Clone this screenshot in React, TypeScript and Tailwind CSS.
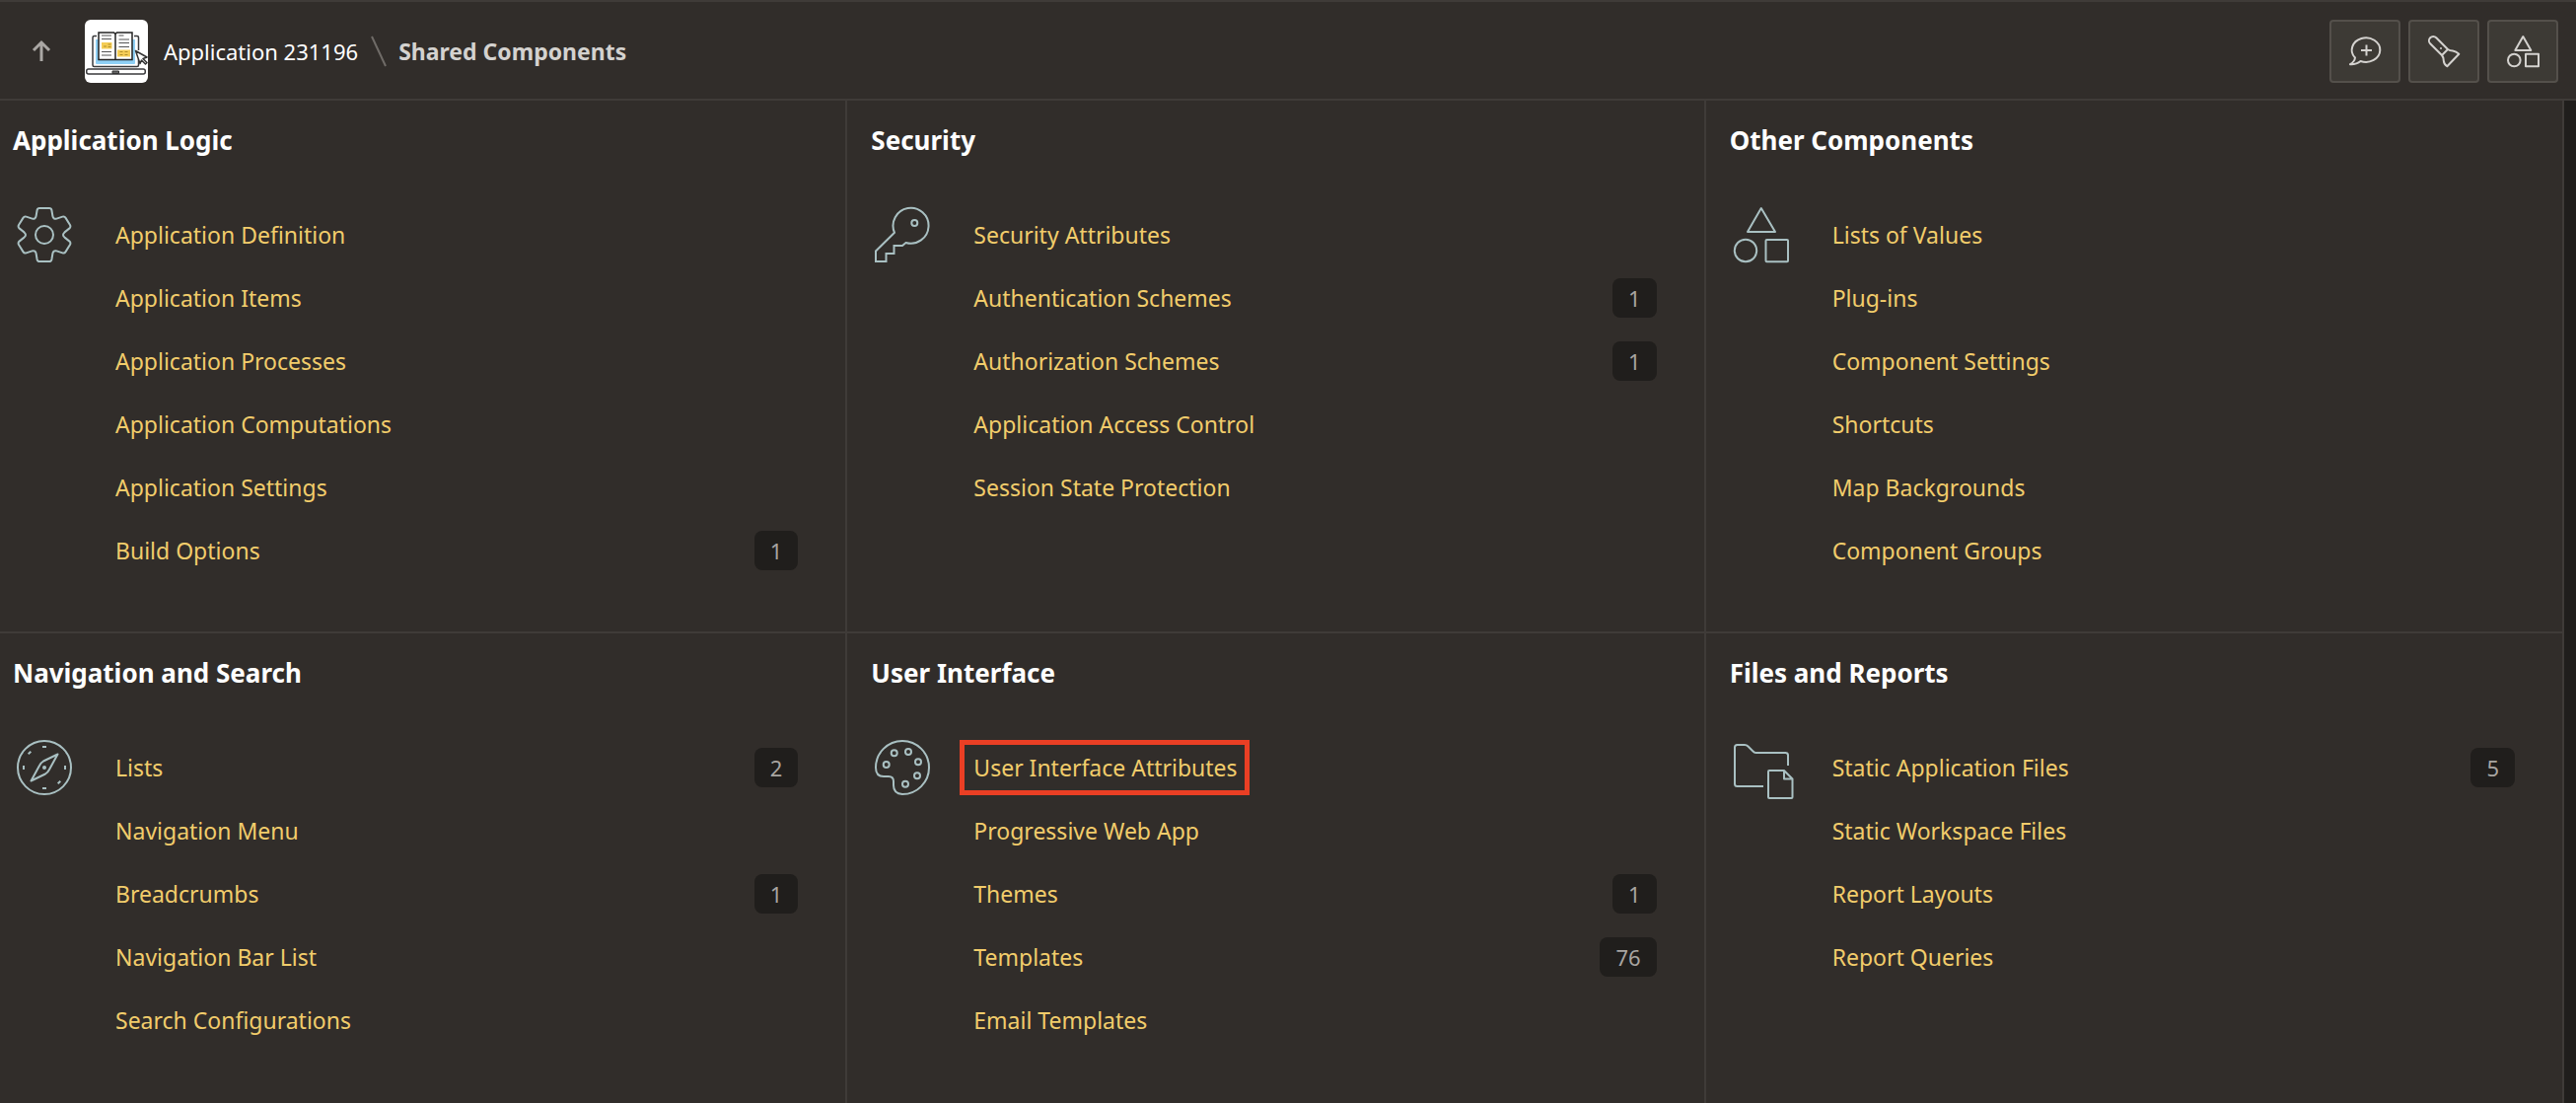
import type { ReactNode } from "react";

type Item = { label: string; count?: number; highlighted?: boolean };
type Section = { title: string; icon: ReactNode; items: Item[] };

function SectionIcon({ children }: { children: ReactNode }) {
  return (
    <svg
      viewBox="0 0 64 64"
      className="size-16 shrink-0 overflow-visible text-[#a9c0c2]"
      fill="none"
      stroke="currentColor"
      strokeWidth="2"
      strokeLinejoin="round"
      aria-hidden="true"
    >
      {children}
    </svg>
  );
}

const gear = (
  <SectionIcon>
    <path d="M27 5h10q2 0 2.4 2l1 6q.6 3.4 4 2.6l6-2q2-.6 3 1l4.6 7.4q1 2-.5 3.4l-5 4q-3 2.6 0 5.2l5 4q1.5 1.4.5 3.4l-4.6 7.4q-1 1.6-3 1l-6-2q-3.4-.8-4 2.6l-1 6q-.4 2-2.4 2h-10q-2 0-2.4-2l-1-6q-.6-3.4-4-2.6l-6 2q-2 .6-3-1l-4.6-7.4q-1-2 .5-3.4l5-4q3-2.6 0-5.2l-5-4q-1.5-1.4-.5-3.4l4.6-7.4q1-1.6 3-1l6 2q3.4.8 4-2.6l1-6q.4-2 2.4-2z" />
    <circle cx="32" cy="32" r="9" />
  </SectionIcon>
);

const key = (
  <SectionIcon>
    <path strokeLinejoin="miter" d="M24 29.8 5 48.5V59h10.5v-8h8v-8H32l3.5-3A18 18 0 1 0 24 29.8z" />
    <circle cx="44.3" cy="20" r="3" />
  </SectionIcon>
);

const shapes = (
  <SectionIcon>
    <path d="M31.8 5 18 29h28z" />
    <circle cx="16" cy="48" r="11.2" />
    <rect x="36.5" y="37" width="22.5" height="22.3" rx="1" />
  </SectionIcon>
);

const compass = (
  <SectionIcon>
    <circle cx="32" cy="32" r="27" />
    <path d="M45.5 18.5 31 25.5q-2.5 1.5-4 4.5l-8.5 15.5L33 38.5q2.5-1.5 4-4.5z" />
    <circle cx="32" cy="32" r="2" fill="currentColor" stroke="none" />
    <path d="M30 11h4M30 53h4M11 30v4M53 30v4M15.7 18.3l2.6-2.6M45.7 48.3l2.6-2.6" />
  </SectionIcon>
);

const palette = (
  <SectionIcon>
    <path d="M5 32A27 27 0 1 1 32 59q-9-.5-9-9v-4q0-5-5-5h-5q-8 0-8-9z" />
    <circle cx="15.7" cy="29" r="3" />
    <circle cx="23.7" cy="17.3" r="3" />
    <circle cx="38" cy="16" r="3" />
    <circle cx="48" cy="26.3" r="3" />
    <circle cx="47" cy="40.3" r="3" />
    <circle cx="35" cy="48.7" r="3" />
  </SectionIcon>
);

const folder = (
  <SectionIcon>
    <path d="M34 51H7.5q-2.5 0-2.5-2.5v-37Q5 9 7.5 9H15q2 0 3.5 1.5l5 5q1.5 1.5 3 1.5h30q2.5 0 2.5 2.5V30" />
    <path d="M40 35h15l8.5 8.5V62q0 1-1 1H40q-1 0-1-1V36q0-1 1-1zM55 35v8.5h8.5" />
  </SectionIcon>
);

const sections: Section[] = [
  {
    title: "Application Logic",
    icon: gear,
    items: [
      { label: "Application Definition" },
      { label: "Application Items" },
      { label: "Application Processes" },
      { label: "Application Computations" },
      { label: "Application Settings" },
      { label: "Build Options", count: 1 },
    ],
  },
  {
    title: "Security",
    icon: key,
    items: [
      { label: "Security Attributes" },
      { label: "Authentication Schemes", count: 1 },
      { label: "Authorization Schemes", count: 1 },
      { label: "Application Access Control" },
      { label: "Session State Protection" },
    ],
  },
  {
    title: "Other Components",
    icon: shapes,
    items: [
      { label: "Lists of Values" },
      { label: "Plug-ins" },
      { label: "Component Settings" },
      { label: "Shortcuts" },
      { label: "Map Backgrounds" },
      { label: "Component Groups" },
    ],
  },
  {
    title: "Navigation and Search",
    icon: compass,
    items: [
      { label: "Lists", count: 2 },
      { label: "Navigation Menu" },
      { label: "Breadcrumbs", count: 1 },
      { label: "Navigation Bar List" },
      { label: "Search Configurations" },
    ],
  },
  {
    title: "User Interface",
    icon: palette,
    items: [
      { label: "User Interface Attributes", highlighted: true },
      { label: "Progressive Web App" },
      { label: "Themes", count: 1 },
      { label: "Templates", count: 76 },
      { label: "Email Templates" },
    ],
  },
  {
    title: "Files and Reports",
    icon: folder,
    items: [
      { label: "Static Application Files", count: 5 },
      { label: "Static Workspace Files" },
      { label: "Report Layouts" },
      { label: "Report Queries" },
    ],
  },
];

function SectionPanel({ title, icon, items }: Section) {
  return (
    <section className="border-r-2 border-b-2 border-[#3f3b38] pt-5 pr-12 pb-[50px] pl-6 nth-[n+4]:border-b-0 nth-[n+4]:pb-10">
      <h2 className="text-[26px] leading-10 font-bold text-white">{title}</h2>
      <div className="mt-11 flex items-start gap-10">
        {icon}
        <ul className="grow">
          {items.map((item) => (
            <li key={item.label} className="flex h-16 items-center justify-between">
              <a href="#" className="relative text-[23px] leading-8 text-[#f1cc6b]">
                {item.label}
                {item.highlighted && (
                  <span className="absolute -inset-y-3 -right-3 -left-3.5 border-5 border-[#ea3f24]" />
                )}
              </a>
              {item.count !== undefined && (
                <span className="h-10 rounded-lg bg-[#201e1c] px-4 text-[22px] leading-10 text-[#a8a5a1]">
                  {item.count}
                </span>
              )}
            </li>
          ))}
        </ul>
      </div>
    </section>
  );
}

function ToolButton({ label, children }: { label: string; children: ReactNode }) {
  return (
    <button
      type="button"
      aria-label={label}
      className="flex h-16 w-18 items-center justify-center rounded border-2 border-[#54504b] bg-[#3d3a35] text-[#d4d2cf]"
    >
      <svg
        viewBox="0 0 32 32"
        className="size-8 overflow-visible"
        fill="none"
        stroke="currentColor"
        strokeWidth="2"
        strokeLinejoin="round"
        aria-hidden="true"
      >
        {children}
      </svg>
    </button>
  );
}

function AppIcon() {
  return (
    <svg viewBox="0 0 64 64" className="size-16 rounded-md bg-white" fill="none" aria-hidden="true">
      <path fill="#8fd0f5" d="M11 20h40v24q0 1-1 1H12q-1 0-1-1z" />
      <path
        stroke="#3a3a3c"
        strokeWidth="1.5"
        d="M12 16.500H9.5q-1.5 0-1.5 1.5v28q0 1.5 1.5 1.5h43.500q1.5 0 1.5-1.5V40M50 16.500h3q1.5 0 1.5 1.5v13"
      />
      <path fill="#fff" stroke="#222" strokeWidth="1.5" d="M14 13h15.500l1.5 1.5 1.5-1.5H48v27.500H14z" />
      <path stroke="#222" strokeWidth="1.5" d="M31 14.500v26" />
      <path
        stroke="#555"
        strokeWidth="1.2"
        d="M17 16h10M17 19.500h10M17 32.500h10M17 36h10M34.500 16h5M34.500 20h10.500M34.500 23.500h10.500M34.500 27.500h10.500"
      />
      <path fill="#f5cd55" d="M17 23h10.500v6.500H17zM33 30.500h13v7H33z" />
      <path stroke="#b08f2c" strokeWidth="1" d="M19 27h3M23.500 25h3M23.500 27.500h3M35.500 32.500h3M40.500 32.500h3M35.500 35.500h3M40.500 35.500h3" />
      <rect x="1.75" y="50" width="59.5" height="5" rx="2" fill="#fff" stroke="#3a3a3c" strokeWidth="1.5" />
      <path fill="#666" stroke="#333" d="M28 52h6.500v2.500H28z" />
      <path
        fill="#fff"
        stroke="#333"
        strokeWidth="1.5"
        strokeLinejoin="round"
        d="m51.500 31.500 11.500 6.500-4 1.500 4 4-1.500 1.500-4-4-1.500 3.500z"
      />
    </svg>
  );
}

export default function App() {
  return (
    <div className="flex min-h-screen flex-col overflow-hidden bg-[#312d2a] font-['Noto_Sans',sans-serif]">
      <header className="flex items-center border-y-2 border-[#3f3b38] pt-[18px] pr-[18px] pb-4 pl-8">
        <button type="button" aria-label="Go up" className="text-[#aaa7a4]">
          <svg viewBox="0 0 20 24" className="h-6 w-5" fill="none" stroke="currentColor" strokeWidth="3" aria-hidden="true">
            <path d="M10 22V3M2 11l8-8 8 8" />
          </svg>
        </button>
        <nav aria-label="Breadcrumb" className="ml-[34px] flex items-center">
          <AppIcon />
          <a href="#" className="ml-4 text-[22px] leading-8 text-white">
            Application 231196
          </a>
          <svg viewBox="0 0 16 32" className="mr-3 ml-[13px] h-8 w-4" stroke="#6f6b67" strokeWidth="2" aria-hidden="true">
            <path d="M1 1l14 30" />
          </svg>
          <span className="text-[23px] leading-8 font-bold text-[#d4d2cf]" aria-current="page">
            Shared Components
          </span>
        </nav>
        <div className="ml-auto flex gap-2">
          <ToolButton label="Add comment">
            <path d="M6 22.500A14.300 12.300 0 1 1 11.500 26Q7.500 29.500 1 29.200 5.500 26.500 6 22.500zM17.500 9.500v11M12 15h11" />
          </ToolButton>
          <ToolButton label="Find">
            <path d="M20 14 8.300 2.200A4.300 4.300 0 0 0 2.200 8.300L14 20zM20 14q2 1.500 5 1.500 3.500 .5 6.300 3.200L19.300 31.300Q16 29 15.800 25.500 15.700 22 14 20" />
            <circle cx="13" cy="13" r="1" fill="currentColor" stroke="none" />
          </ToolButton>
          <ToolButton label="Shared components">
            <path d="M16.300 1 8.300 15h16z" />
            <circle cx="7.3" cy="25" r="6.3" />
            <rect x="19" y="18.7" width="13" height="12.6" />
          </ToolButton>
        </div>
      </header>
      <div className="flex grow">
        <main className="-ml-[11px] grid grow grid-cols-3 grid-rows-[auto_1fr]">
          {sections.map((section) => (
            <SectionPanel key={section.title} {...section} />
          ))}
        </main>
        <div className="w-3 shrink-0 bg-[#201e1c]" />
      </div>
    </div>
  );
}
